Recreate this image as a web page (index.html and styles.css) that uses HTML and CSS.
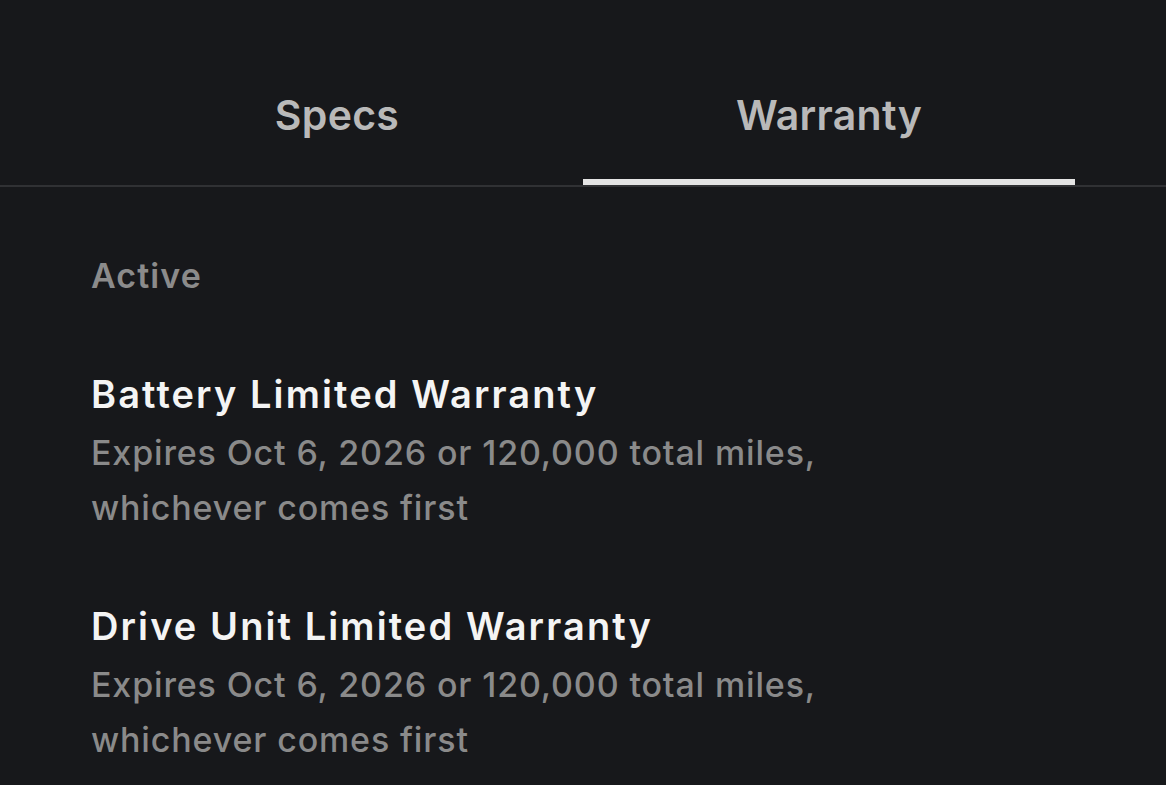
FILE: index.html
```html
<!DOCTYPE html>
<html lang="en">
<head>
<meta charset="utf-8">
<title>Warranty</title>
<link rel="stylesheet" href="styles.css">
</head>
<body>
<nav class="tabbar">
  <div class="tabs">
    <div class="tab">Specs</div>
    <div class="tab tab-active">Warranty</div>
  </div>
</nav>
<main class="content">
  <div class="section-label">Active</div>
  <div class="item">
    <div class="item-title">Battery Limited Warranty</div>
    <div class="item-desc">Expires Oct 6, 2026 or 120,000 total miles, whichever comes first</div>
  </div>
  <div class="item">
    <div class="item-title">Drive Unit Limited Warranty</div>
    <div class="item-desc">Expires Oct 6, 2026 or 120,000 total miles, whichever comes first</div>
  </div>
</main>
</body>
</html>
```
FILE: styles.css
```css
html, body {
  margin: 0;
  padding: 0;
  background: #17181b;
  font-family: Inter, "Noto Sans", sans-serif;
}
html {
  height: 785px;
  overflow: hidden;
}
body {
  width: 1166px;
  height: 785px;
  overflow: hidden;
}
.tabbar {
  border-bottom: 2px solid #303134;
}
.tabs {
  display: flex;
  margin: 0 91px;
}
.tab {
  flex: 1;
  text-align: center;
  font-size: 41px;
  line-height: 50px;
  font-weight: 600;
  letter-spacing: 0.3px;
  color: #b9b9b9;
  padding-top: 90px;
  height: 89px;
  border-bottom: 6px solid transparent;
}
.tab-active {
  border-bottom-color: #e4e4e4;
}
.content {
  padding: 69px 0 0 91px;
}
.section-label {
  font-size: 34px;
  line-height: 40px;
  font-weight: 600;
  letter-spacing: 1.1px;
  color: #8b8b8b;
  margin-bottom: 75px;
}
.item {
  margin-bottom: 68px;
}
.item:last-child {
  margin-bottom: 0;
}
.item-title {
  font-size: 38px;
  line-height: 46px;
  font-weight: 600;
  letter-spacing: 2.1px;
  color: #f4f4f4;
}
.item-desc {
  margin-top: 8px;
  font-size: 34px;
  line-height: 55px;
  font-weight: 500;
  letter-spacing: 0.85px;
  color: #8a8a8a;
  max-width: 780px;
}
```
